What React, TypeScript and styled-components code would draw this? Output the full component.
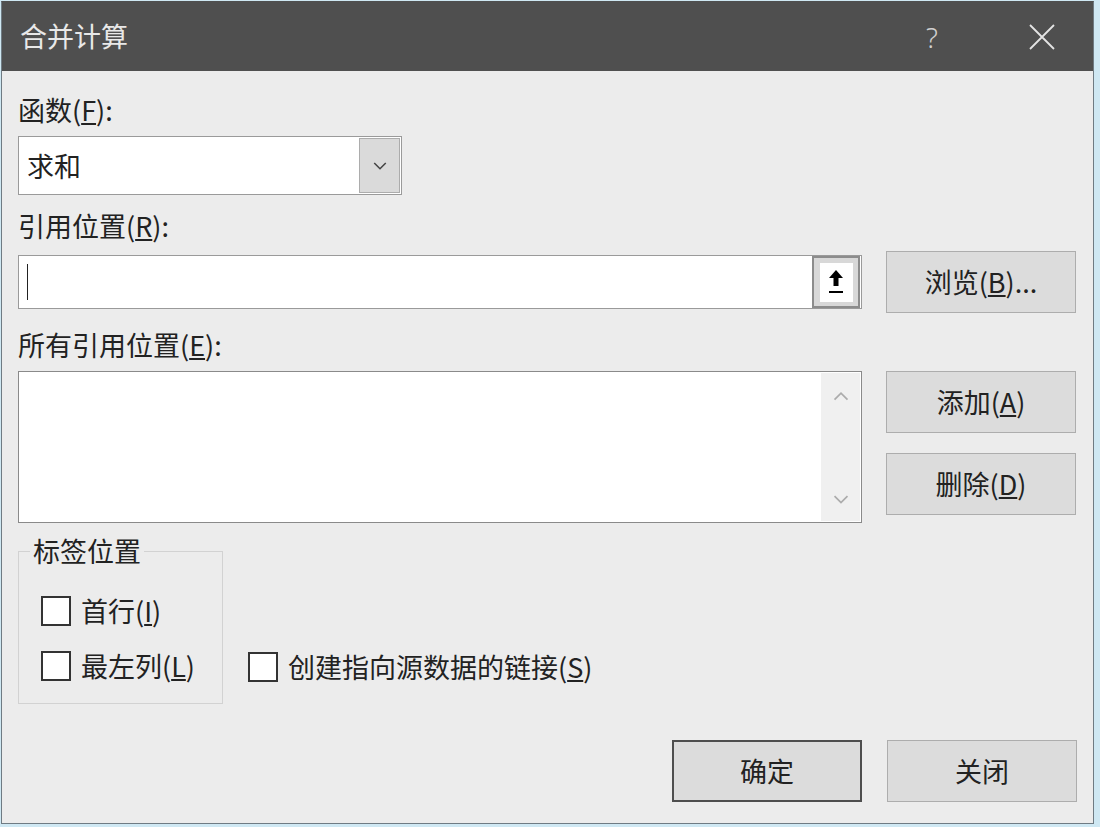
import React from "react";
import styled, { createGlobalStyle } from "styled-components";

const Global = createGlobalStyle`
  html, body { margin: 0; padding: 0; background: #cfe8f3; }
  body { font-family: "Noto Sans CJK SC", "Noto Sans", sans-serif; }
  * { box-sizing: border-box; }
`;

const Dialog = styled.div`
  margin: 1px 0 0 1px;
  width: 1093px;
  height: 823px;
  border: 1px solid #6f7b83;
  border-top-color: #4f4f4f;
  background: #ececec;
  display: flex;
  flex-direction: column;
  color: #222;
  font-size: 27px;
`;

const TitleBar = styled.div`
  height: 69px;
  background: #4f4f4f;
  display: flex;
  align-items: center;
  gap: 29px;
  padding: 0 0 0 18px;
  color: #e8e8e8;
`;

const Title = styled.div`
  flex: 1;
  font-size: 27px;
  line-height: 36px;
  margin-top: -2px;
`;

const TitleButton = styled.div<{ $w: number }>`
  width: ${(p) => p.$w}px;
  height: 69px;
  display: flex;
  align-items: center;
  justify-content: center;
  color: #d0d0d0;
  font-family: "Noto Sans", sans-serif;
  font-weight: 300;
  font-size: 28px;
`;

const Body = styled.div`
  flex: 1;
  padding: 21px 16px 0 16px;
  display: flex;
  flex-direction: column;
`;

const Label = styled.div<{ $mt?: number }>`
  height: 36px;
  line-height: 36px;
  margin-top: ${(p) => p.$mt ?? 0}px;
  white-space: nowrap;
`;

const Select = styled.div`
  margin-top: 8px;
  width: 384px;
  height: 59px;
  background: #fff;
  border: 1px solid #9a9a9a;
  display: flex;
  align-items: center;
  padding: 1px 1px 1px 0;
`;

const SelectValue = styled.div`
  flex: 1;
  padding-left: 8px;
  line-height: 36px;
`;

const DropButton = styled.div`
  width: 41px;
  height: 55px;
  background: #dadada;
  border: 1px solid #acacac;
  display: flex;
  align-items: center;
  justify-content: center;
`;

const Row = styled.div<{ $mt: number; $align?: string }>`
  display: flex;
  gap: 24px;
  margin-top: ${(p) => p.$mt}px;
  align-items: ${(p) => p.$align ?? "center"};
`;

const TextInput = styled.div`
  width: 844px;
  height: 54px;
  background: #fff;
  border: 1px solid #9a9a9a;
  display: flex;
  align-items: center;
  padding: 0 1px 0 8px;
`;

const Caret = styled.div`
  flex: 1;
  height: 36px;
  border-left: 1px solid #222;
`;

const CollapseButton = styled.div`
  width: 48px;
  height: 52px;
  background: #d8d8d8;
  border: 2px solid #8c8c8c;
  display: flex;
  align-items: center;
  justify-content: center;
`;

const CollapseInner = styled.div`
  width: 33px;
  height: 39px;
  background: #fff;
  display: flex;
  align-items: center;
  justify-content: center;
`;

const Button = styled.div<{ $h?: number; $default?: boolean }>`
  width: 190px;
  height: ${(p) => p.$h ?? 62}px;
  background: #dcdcdc;
  border: ${(p) => (p.$default ? "2px solid #4e4e4e" : "1px solid #adadad")};
  display: flex;
  align-items: center;
  justify-content: center;
  color: #222;
  white-space: nowrap;
  line-height: 36px;
`;

const ListBox = styled.div`
  width: 844px;
  height: 152px;
  background: #fff;
  border: 1px solid #8a8a8a;
  display: flex;
  justify-content: flex-end;
  padding: 1px;
`;

const ScrollBar = styled.div`
  width: 39px;
  background: #f0f0f0;
  display: flex;
  flex-direction: column;
  justify-content: space-between;
  align-items: center;
  padding: 18px 0 16px;
`;

const ButtonColumn = styled.div`
  display: flex;
  flex-direction: column;
  gap: 20px;
`;

const Bottom = styled.div`
  display: flex;
  margin-top: 10px;
  gap: 25px;
  align-items: flex-end;
`;

const Group = styled.fieldset`
  margin: 0;
  width: 205px;
  height: 171px;
  border: 1px solid #d2d2d2;
  padding: 24px 0 0 22px;
  display: flex;
  flex-direction: column;
  gap: 19px;
`;

const Legend = styled.legend`
  margin-left: -11px;
  padding: 0 3px;
  line-height: 36px;
  height: 36px;
`;

const Check = styled.label<{ $mb?: number }>`
  display: flex;
  align-items: center;
  gap: 10px;
  height: 36px;
  line-height: 36px;
  white-space: nowrap;
  margin-bottom: ${(p) => p.$mb ?? 0}px;
`;

const Box = styled.span`
  width: 30px;
  height: 30px;
  background: #fff;
  border: 2px solid #333;
  flex: none;
`;

const Footer = styled.div`
  display: flex;
  justify-content: flex-end;
  gap: 25px;
  margin-top: 36px;
  align-items: center;
`;

const Chevron = ({ up, color, w = 16 }: { up?: boolean; color: string; w?: number }) => (
  <svg width={w} height={w * 0.6} viewBox="0 0 16 10">
    <polyline
      points={up ? "2,8 8,2 14,8" : "2,2 8,8 14,2"}
      fill="none"
      stroke={color}
      strokeWidth="1.6"
    />
  </svg>
);

export default function App() {
  return (
    <>
      <Global />
      <Dialog>
        <TitleBar>
          <Title>合并计算</Title>
          <TitleButton $w={60}>?</TitleButton>
          <TitleButton $w={102}>
            <svg width="26" height="26" viewBox="0 0 26 26">
              <path d="M1 1 L25 25 M25 1 L1 25" stroke="#e4e4e4" strokeWidth="1.8" />
            </svg>
          </TitleButton>
        </TitleBar>
        <Body>
          <Label>
            函数(<u>F</u>):
          </Label>
          <Select>
            <SelectValue>求和</SelectValue>
            <DropButton>
              <Chevron color="#444" />
            </DropButton>
          </Select>
          <Label $mt={13}>
            引用位置(<u>R</u>):
          </Label>
          <Row $mt={7}>
            <TextInput>
              <Caret />
              <CollapseButton>
                <CollapseInner>
                  <svg width="20" height="28" viewBox="0 0 20 28">
                    <path d="M10 2 L17 10 L12.5 10 L12.5 18 L7.5 18 L7.5 10 L3 10 Z" fill="#000" />
                    <rect x="3" y="23" width="14" height="2" fill="#000" />
                  </svg>
                </CollapseInner>
              </CollapseButton>
            </TextInput>
            <Button>
              浏览(<u>B</u>)...
            </Button>
          </Row>
          <Label $mt={14}>
            所有引用位置(<u>E</u>):
          </Label>
          <Row $mt={8} $align="flex-start">
            <ListBox>
              <ScrollBar>
                <Chevron up color="#acacac" w={18} />
                <Chevron color="#acacac" w={18} />
              </ScrollBar>
            </ListBox>
            <ButtonColumn>
              <Button $h={62}>
                添加(<u>A</u>)
              </Button>
              <Button $h={62}>
                删除(<u>D</u>)
              </Button>
            </ButtonColumn>
          </Row>
          <Bottom>
            <Group>
              <Legend>标签位置</Legend>
              <Check>
                <Box />
                <span>
                  首行(<u>I</u>)
                </span>
              </Check>
              <Check>
                <Box />
                <span>
                  最左列(<u>L</u>)
                </span>
              </Check>
            </Group>
            <Check $mb={19}>
              <Box />
              <span>
                创建指向源数据的链接(<u>S</u>)
              </span>
            </Check>
          </Bottom>
          <Footer>
            <Button $default>确定</Button>
            <Button>关闭</Button>
          </Footer>
        </Body>
      </Dialog>
    </>
  );
}
